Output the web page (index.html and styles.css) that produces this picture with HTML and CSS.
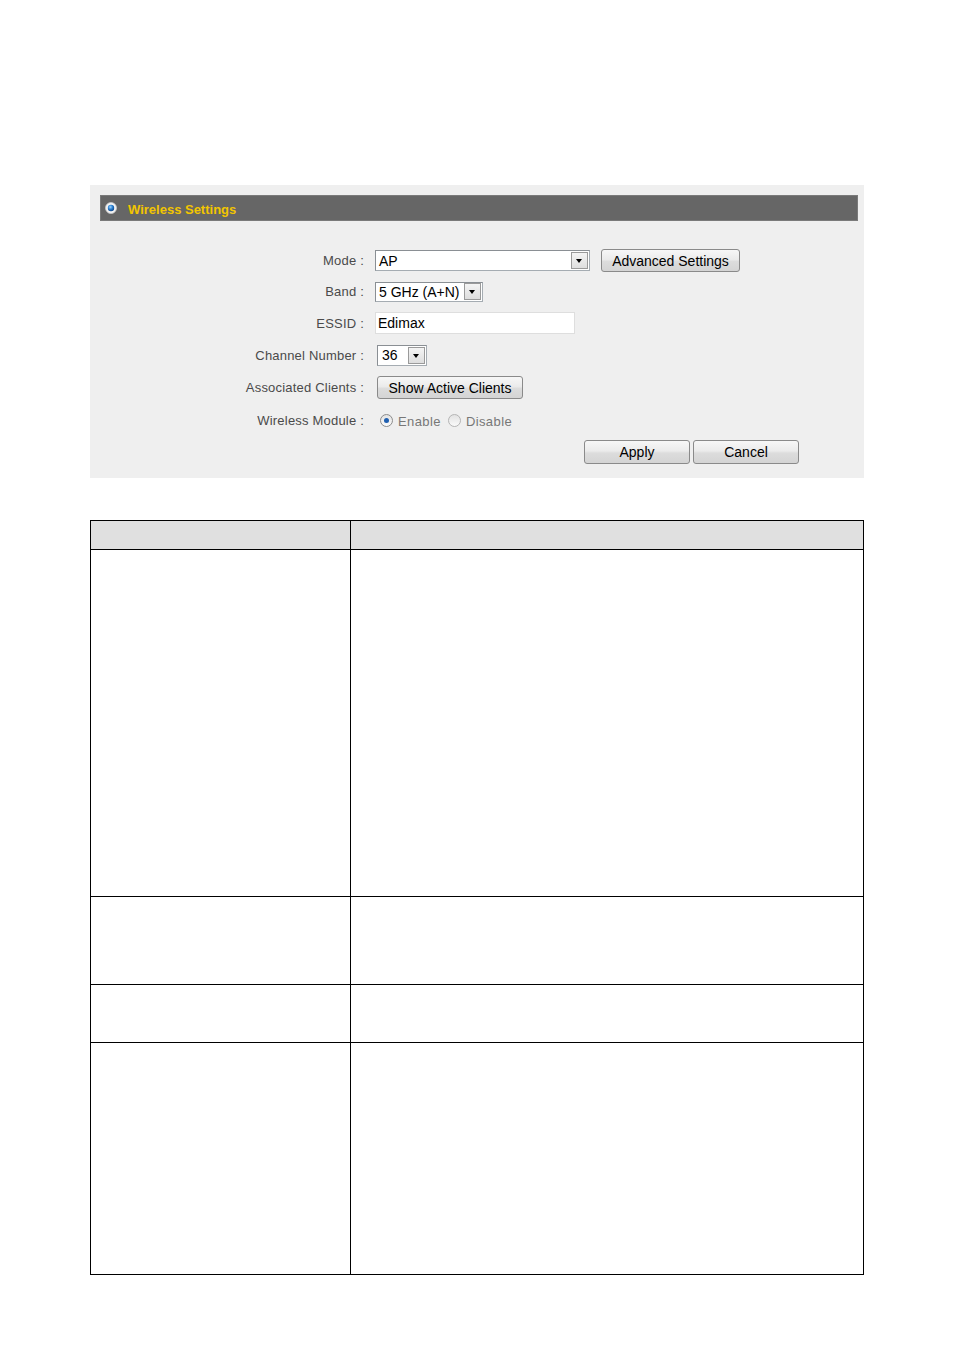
FILE: index.html
```html
<!DOCTYPE html>
<html lang="en">
<head>
  <meta charset="UTF-8">
  <title>Wireless Settings</title>
  <link rel="stylesheet" href="styles.css">
</head>
<body>
  <div class="page">
    <div class="panel">
      <div class="panel-head">
        <svg class="head-icon" width="12" height="12" viewBox="0 0 12 12">
          <defs>
            <radialGradient id="dot" cx="0.4" cy="0.35" r="0.7">
              <stop offset="0" stop-color="#9fd6ff"/>
              <stop offset="0.5" stop-color="#2a7fd0"/>
              <stop offset="1" stop-color="#0b3f80"/>
            </radialGradient>
          </defs>
          <circle cx="6" cy="6" r="5.5" fill="#f4f4f4" stroke="#c8c8c8" stroke-width="0.8"/>
          <circle cx="6" cy="6" r="3.2" fill="url(#dot)"/>
        </svg>
        <span class="head-title">Wireless Settings</span>
      </div>

      <div class="form">
        <div class="label">Mode :</div>
        <div class="field">
          <div class="select mode-select">
            <span class="value">AP</span>
            <span class="arrow"></span>
          </div>
          <button class="btn adv-btn">Advanced Settings</button>
        </div>

        <div class="label">Band :</div>
        <div class="field">
          <div class="select band-select">
            <span class="value">5 GHz (A+N)</span>
            <span class="arrow"></span>
          </div>
        </div>

        <div class="label">ESSID :</div>
        <div class="field">
          <input class="text-input" type="text" value="Edimax">
        </div>

        <div class="label">Channel Number :</div>
        <div class="field">
          <div class="select channel-select">
            <span class="value">36</span>
            <span class="arrow"></span>
          </div>
        </div>

        <div class="label">Associated Clients :</div>
        <div class="field">
          <button class="btn clients-btn">Show Active Clients</button>
        </div>

        <div class="label">Wireless Module :</div>
        <div class="field radios">
          <span class="radio checked"></span><span class="radio-text">Enable</span>
          <span class="radio"></span><span class="radio-text">Disable</span>
        </div>

        <div class="label"></div>
        <div class="field actions">
          <button class="btn action-btn">Apply</button>
          <button class="btn action-btn">Cancel</button>
        </div>
      </div>
    </div>

    <table class="desc">
      <tr class="head-row"><th class="col1"></th><th></th></tr>
      <tr class="row-a"><td></td><td></td></tr>
      <tr class="row-b"><td></td><td></td></tr>
      <tr class="row-c"><td></td><td></td></tr>
      <tr class="row-d"><td></td><td></td></tr>
    </table>
  </div>
</body>
</html>
```

FILE: styles.css
```css
body {
  margin: 0;
  background: #fff;
  font-family: "Liberation Sans", Arial, sans-serif;
}

.page {
  padding: 185px 90px 0;
  width: 774px;
}

.panel {
  background: #efefef;
  padding: 10px 6px 10px 10px;
}

.panel-head {
  display: flex;
  align-items: center;
  height: 26px;
  background: #666;
  border: 1px solid #7a7a7a;
  box-sizing: border-box;
  padding-left: 4px;
}

.head-icon {
  display: block;
}

.head-title {
  margin-left: 11px;
  margin-top: 3px;
  color: #f2c500;
  font-weight: bold;
  font-size: 13px;
}

.form {
  display: grid;
  grid-template-columns: 264px 1fr;
  grid-template-rows: 31px 31px 32px 32px 33px 32px 32px;
  column-gap: 11px;
  margin-top: 24px;
}

.label {
  display: flex;
  align-items: center;
  justify-content: flex-end;
  font-size: 13px;
  letter-spacing: 0.2px;
  color: #4a4a4a;
}

.field {
  display: flex;
  align-items: center;
}

.select {
  display: flex;
  align-items: center;
  box-sizing: border-box;
  background: #fff;
  border: 1px solid #a5acb2;
  border-top-color: #8a8f94;
  border-left-color: #8a8f94;
}

.select .value {
  flex: 1;
  padding-left: 3px;
  font-size: 14px;
  color: #000;
  white-space: nowrap;
}

.select .arrow {
  position: relative;
  width: 17px;
  height: 17px;
  margin-right: 1px;
  box-sizing: border-box;
  border: 1px solid #9a9a9a;
  background: linear-gradient(#f4f4f4, #dedede);
}

.select .arrow::after {
  content: "";
  position: absolute;
  left: 4px;
  top: 6px;
  border-left: 3.5px solid transparent;
  border-right: 3.5px solid transparent;
  border-top: 4px solid #000;
}

.mode-select {
  width: 215px;
  height: 21px;
}

.band-select {
  width: 108px;
  height: 20px;
}

.channel-select {
  width: 50px;
  height: 21px;
  margin-left: 2px;
}

.channel-select .value {
  padding-left: 4px;
}

.text-input {
  width: 200px;
  height: 22px;
  box-sizing: border-box;
  border: 1px solid #dedede;
  background: #fff;
  padding: 0 2px;
  font-family: "Liberation Sans", Arial, sans-serif;
  font-size: 14px;
  color: #000;
  outline: none;
}

.btn {
  box-sizing: border-box;
  height: 23px;
  border: 1px solid #8a8a8a;
  border-radius: 3px;
  background: linear-gradient(#f7f7f7, #ebebeb 45%, #dcdcdc 55%, #d4d4d4);
  font-family: "Liberation Sans", Arial, sans-serif;
  font-size: 14px;
  color: #000;
  padding: 0;
}

.adv-btn {
  width: 139px;
  margin-left: 11px;
}

.clients-btn {
  width: 146px;
  margin-left: 2px;
}

.radios {
  padding-left: 5px;
}

.radio {
  position: relative;
  width: 11px;
  height: 11px;
  border-radius: 50%;
  border: 1px solid #b4b4b4;
  background: linear-gradient(#e2e2e2, #fafafa);
}

.radio.checked {
  border-color: #8c8c8c;
}

.radio.checked::after {
  content: "";
  position: absolute;
  left: 3px;
  top: 3px;
  width: 5px;
  height: 5px;
  border-radius: 50%;
  background: #1f5fb0;
}

.radio-text {
  margin-left: 5px;
  margin-right: 7px;
  font-size: 13px;
  letter-spacing: 0.4px;
  color: #777;
  padding-top: 2px;
}

.actions {
  padding-left: 209px;
}

.action-btn {
  width: 106px;
  height: 24px;
  margin-right: 3px;
}

.desc {
  margin-top: 42px;
  width: 774px;
  border-collapse: collapse;
  table-layout: fixed;
}

.desc th,
.desc td {
  border: 1px solid #000;
  padding: 0;
}

.desc .col1 {
  width: 259px;
}

.head-row th {
  background: #e0e0e0;
  height: 28px;
}

.row-a td {
  height: 346px;
}

.row-b td {
  height: 87px;
}

.row-c td {
  height: 57px;
}

.row-d td {
  height: 231px;
}
```
